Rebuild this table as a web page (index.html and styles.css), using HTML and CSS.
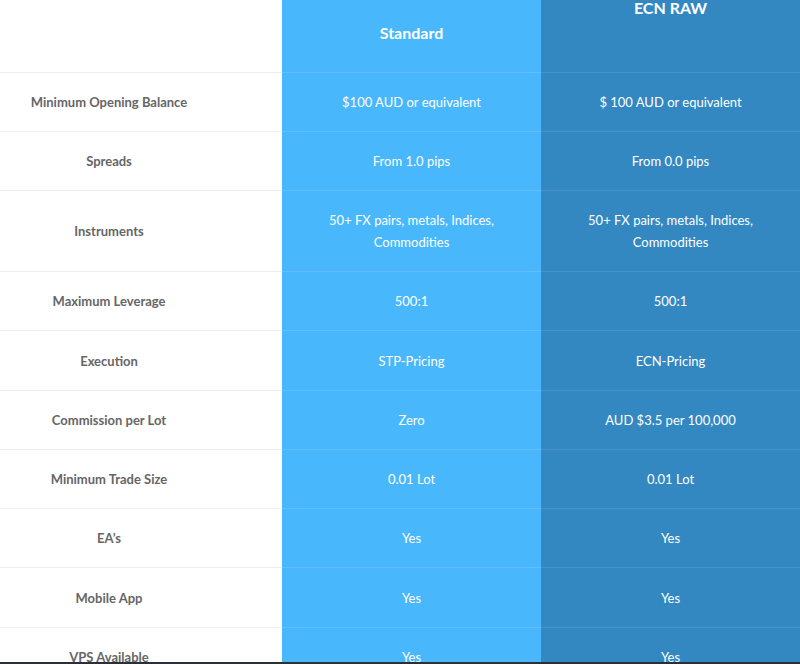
FILE: index.html
```html
<!DOCTYPE html>
<html>
<head>
<meta charset="utf-8">
<link rel="stylesheet" href="styles.css">
</head>
<body>
<div class="page">
  <div class="compare">
    <div class="row head">
      <div class="cell label"></div>
      <div class="cell std"><span class="title">Standard</span></div>
      <div class="cell ecn top"><span class="title">ECN RAW</span></div>
    </div>
    <div class="row">
      <div class="cell label">Minimum Opening Balance</div>
      <div class="cell std">$100 AUD or equivalent</div>
      <div class="cell ecn">$ 100 AUD or equivalent</div>
    </div>
    <div class="row">
      <div class="cell label">Spreads</div>
      <div class="cell std">From 1.0 pips</div>
      <div class="cell ecn">From 0.0 pips</div>
    </div>
    <div class="row tall">
      <div class="cell label">Instruments</div>
      <div class="cell std">50+ FX pairs, metals, Indices,<br>Commodities</div>
      <div class="cell ecn">50+ FX pairs, metals, Indices,<br>Commodities</div>
    </div>
    <div class="row">
      <div class="cell label">Maximum Leverage</div>
      <div class="cell std">500:1</div>
      <div class="cell ecn">500:1</div>
    </div>
    <div class="row r60">
      <div class="cell label">Execution</div>
      <div class="cell std">STP-Pricing</div>
      <div class="cell ecn">ECN-Pricing</div>
    </div>
    <div class="row">
      <div class="cell label">Commission per Lot</div>
      <div class="cell std">Zero</div>
      <div class="cell ecn">AUD $3.5 per 100,000</div>
    </div>
    <div class="row">
      <div class="cell label">Minimum Trade Size</div>
      <div class="cell std">0.01 Lot</div>
      <div class="cell ecn">0.01 Lot</div>
    </div>
    <div class="row">
      <div class="cell label">EA’s</div>
      <div class="cell std">Yes</div>
      <div class="cell ecn">Yes</div>
    </div>
    <div class="row r60">
      <div class="cell label">Mobile App</div>
      <div class="cell std">Yes</div>
      <div class="cell ecn">Yes</div>
    </div>
    <div class="row">
      <div class="cell label">VPS Available</div>
      <div class="cell std">Yes</div>
      <div class="cell ecn">Yes</div>
    </div>
  </div>
</div>
<div class="bottom-bar"></div>
</body>
</html>
```

FILE: styles.css
```css
html, body {
  margin: 0;
  padding: 0;
  height: 664px;
  overflow: hidden;
  background: #fff;
}
body {
  font-family: "Lato", "Open Sans", sans-serif;
  font-size: 13px;
}
.page {
  width: 800px;
}
.compare {
  display: flex;
  flex-direction: column;
}
.row {
  display: grid;
  grid-template-columns: 282px 259px 259px;
  height: 59px;
}
.row.r60 {
  height: 60px;
}
.row.head {
  height: 72px;
}
.row.tall {
  height: 81px;
}
.cell {
  display: flex;
  align-items: center;
  justify-content: center;
  text-align: center;
  line-height: 22px;
  border-top: 1px solid transparent;
  box-sizing: border-box;
}
.row.head .cell {
  border-top: none;
  padding-bottom: 6px;
}
.label {
  color: #666;
  font-weight: 700;
  background: #fff;
  border-top-color: #efefef;
  padding-right: 64px;
}
.std {
  background: #49b7fc;
  color: #fff;
  border-top-color: rgba(255,255,255,0.12);
}
.ecn {
  background: #3388c2;
  color: #fff;
  border-top-color: rgba(255,255,255,0.1);
}
.title {
  font-size: 16px;
  font-weight: 700;
  line-height: 16px;
}
.row.head .ecn.top {
  align-items: flex-start;
  padding-top: 0;
  padding-bottom: 0;
}
.bottom-bar {
  position: fixed;
  left: 0;
  right: 0;
  bottom: 0;
  height: 2px;
  background: #2b3037;
}
```
